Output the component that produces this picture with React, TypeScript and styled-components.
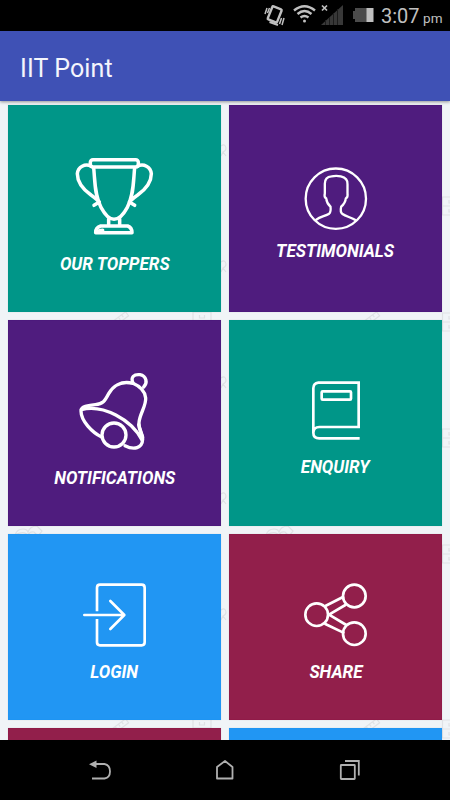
import React from "react";
import styled, { createGlobalStyle } from "styled-components";

const GlobalStyle = createGlobalStyle`
  * { box-sizing: border-box; }
  html, body { margin: 0; padding: 0; }
  body { background: #000; font-family: Roboto, "Open Sans", sans-serif; overflow: hidden; }
`;

const Screen = styled.div`
  width: 450px;
  height: 800px;
  display: flex;
  flex-direction: column;
  overflow: hidden;
  background: #000;
`;

const StatusBar = styled.div`
  height: 31px;
  flex: none;
  display: flex;
  justify-content: flex-end;
  align-items: flex-start;
  padding-right: 7.500px;
  background: #000;
`;

const StatusIcons = styled.svg`
  width: 112px;
  height: 31px;
  display: block;
  margin-right: 5px;
`;

const Clock = styled.div`
  display: flex;
  align-items: baseline;
  justify-content: space-between;
  width: 61.500px;
  color: #c0c0c0;
  font-size: 20px;
  line-height: 33px;
  white-space: nowrap;
`;

const Meridiem = styled.span`
  font-size: 13.500px;
`;

const AppBar = styled.header`
  height: 70px;
  flex: none;
  position: relative;
  display: flex;
  align-items: center;
  padding: 5px 20px 0;
  background: #3f51b5;
  box-shadow: 0 1px 3px rgba(0, 0, 0, 0.4);
  z-index: 1;
`;

const Title = styled.h1`
  margin: 0;
  color: #f4f5fc;
  font-size: 25px;
  font-weight: 400;
  line-height: 32px;
  letter-spacing: 0.1px;
`;

const Content = styled.main`
  height: 639px;
  flex: none;
  position: relative;
  overflow: hidden;
  background: #f0f4f7;
`;

const Doodles = styled.svg`
  position: absolute;
  inset: 0;
  width: 450px;
  height: 639px;
`;

const Grid = styled.div`
  position: relative;
  display: grid;
  grid-template-columns: 213px 213px;
  grid-template-rows: 206.5px 206.5px 186px 186px;
  gap: 8px;
  padding: 4px 8px 0;
`;

const Tile = styled.section<{ $color: string; $edge: string; $top: number }>`
  display: flex;
  flex-direction: column;
  align-items: center;
  padding-top: ${(p) => p.$top}px;
  background: ${(p) => p.$color};
  box-shadow: inset 0 0 1px ${(p) => p.$edge}, 0 0 1px rgba(0, 0, 0, 0.15);
`;

const TileIcon = styled.svg<{ $size: number }>`
  width: ${(p) => p.$size}px;
  height: ${(p) => p.$size}px;
  flex: none;
  fill: none;
  stroke: #fff;
  stroke-width: 8;
  stroke-linecap: round;
  stroke-linejoin: round;
`;

const Label = styled.span<{ $gap: number }>`
  margin-top: ${(p) => p.$gap}px;
  color: #fff;
  font-size: 18px;
  font-weight: 700;
  font-style: italic;
  line-height: 22px;
  white-space: nowrap;
  transform: scaleX(0.95);
`;

const NavBar = styled.nav`
  height: 60px;
  flex: none;
  display: flex;
  justify-content: center;
  align-items: center;
  gap: 101px;
  background: #000;
`;

const NavIcon = styled.svg`
  width: 24px;
  height: 24px;
  fill: none;
  stroke: #b0b0b0;
  stroke-width: 1.8;
`;

const Ruler = ({ x, y }: { x: number; y: number }) => (
  <g transform={`translate(${x} ${y}) rotate(-37)`}>
    <path d="M0 0H17V5H0ZM4 0V3M8 0V3M12 0V3" />
  </g>
);

const Cabinet = ({ x, y }: { x: number; y: number }) => (
  <path transform={`translate(${x} ${y})`} d="M0 0H18V18H0ZM0 9H18M6.500 3V6H11.500V3M6.500 12V15H11.500V12" />
);

const Medal = ({ x, y }: { x: number; y: number }) => (
  <path transform={`translate(${x} ${y})`} d="M0 1Q4 -2 5 3Q5 6 2 7L5 11M2 7L0 11" />
);

const Book = ({ x, y }: { x: number; y: number }) => (
  <path transform={`translate(${x} ${y})`} d="M0 9Q2 3 8 3Q12 3 13 6Q15 0 22 0L27 5L23 10L19 6Q14 5 13 10Q10 4 0 9" />
);

const tiles = [
  {
    label: "OUR TOPPERS", color: "#009688", edge: "#008f80", top: 52, size: 80, gap: 15.500,
    box: "75 36 240 240",
    art: (
      <g strokeWidth="10.500">
        <rect x="121" y="44" width="144" height="22" rx="8" />
        <path d="M131 68C135 105 133 150 153 187C167 213 179 223 192 223S218 213 232 187C252 150 250 105 254 68" />
        <path d="M124 64C105 54 84 66 82 86C82 115 101 134 123 150C132 156 139 162 146 169M262 64C281 54 302 66 304 86C304 115 285 134 263 150C254 156 247 162 240 169" />
        <path d="M132 181L148 171M254 181L238 171" />
        <path d="M176 222V241M209 222V241M152 243H233Q246 248 246 263H137Q137 247 152 243ZM147 260Q149 256 158 256" />
      </g>
    ),
  },
  {
    label: "TESTIMONIALS", color: "#4f1c7e", edge: "#3b086e", top: 61, size: 66, gap: 7.500,
    box: "98.5 33 198 198",
    art: (
      <g strokeWidth="7">
        <circle cx="197" cy="131" r="90.500" />
        <path d="M138 194C151 185 166 183 177 176Q183 171 181 155C173 148 169 139 168 130Q161 127 164 115V86C164 73 171 65 184 64Q198 61 212 64C225 67 233 76 232 88V115Q234 127 227 130C226 140 221 148 213 155Q209 171 217 177C228 185 244 187 257 196" />
      </g>
    ),
  },
  {
    label: "NOTIFICATIONS", color: "#4f1c7e", edge: "#3b086e", top: 52, size: 80, gap: 15.500,
    box: "90 34 240 240",
    art: (
      <g strokeWidth="10">
        <path d="M264 68C227 59 203 77 191 99C179 122 174 130 151 132C123 135 108 138 108 151C108 181 142 216 170 229M240 255C267 269 292 263 293 235C292 216 280 211 282 186C284 159 304 136 302 112Q299 83 264 68" />
        <path d="M109 147C174 130 259 177 291 238M264 67C256 49 267 40 285 42C304 46 309 66 296 79M281 192L293 230" />
        <circle cx="207" cy="223" r="36" />
      </g>
    ),
  },
  {
    label: "ENQUIRY", color: "#009688", edge: "#008f80", top: 58.500, size: 66, gap: 12,
    box: "39 24 198 198",
    art: (
      <g strokeWidth="8" strokeLinejoin="miter" strokeLinecap="butt">
        <path d="M209 205H88Q70 205 70 188Q71 171 88 171H206V38H85Q70 40 70 55V188" />
        <rect x="95" y="64" width="88" height="25" rx="3" />
      </g>
    ),
  },
  {
    label: "LOGIN", color: "#2196f3", edge: "#0c8df5", top: 48, size: 66, gap: 12.500,
    box: "36 36 198 198",
    art: (
      <g strokeWidth="8">
        <path strokeLinecap="butt" d="M81 124V53Q81 44 90 44H215Q224 44 224 53V217Q224 226 215 226H90Q81 226 81 217V147" />
        <path d="M43 135H162M121 93L163 135L121 177" />
      </g>
    ),
  },
  {
    label: "SHARE", color: "#921f4b", edge: "#850433", top: 48, size: 66, gap: 12.500,
    box: "39 36 198 198",
    art: (
      <g strokeWidth="8">
        <circle cx="80" cy="134" r="34" />
        <circle cx="193" cy="78" r="34" />
        <circle cx="193" cy="191" r="34" />
        <path d="M106 108L159 81M117 134L166 105M117 134L169 165M106 162L160 188" />
      </g>
    ),
  },
];

export default function App() {
  return (
    <>
      <GlobalStyle />
      <Screen>
        <StatusBar>
          <StatusIcons viewBox="264 0 112 31" fill="none">
            <g stroke="#c0c0c0">
              <rect x="269.500" y="7.500" width="10" height="14" rx="1" strokeWidth="2.400" transform="rotate(22 274.700 15)" />
              <path d="M269.500 22L278 25" strokeWidth="2" />
              <path d="M267 8L265 14M269.500 8L267.500 13M281.500 18L279.500 24M284 18L282 25" strokeWidth="1.500" />
              <path d="M294 10.500Q304.500 2 315 10.500M297.500 14Q304.500 8 311.500 14M300.500 17.500Q304.500 14.500 308.500 17.500" strokeWidth="2.400" />
              <path d="M322 5.500L327 10.500M327 5.500L322 10.500" strokeWidth="1.700" />
            </g>
            <circle cx="304.500" cy="21" r="1.500" fill="#c0c0c0" />
            <path d="M321 25L343 5V25Z" fill="#383838" />
            <path d="M325.500 25V20M329.500 25V17M333.500 25V13M337.500 25V9" stroke="#1c1c1c" />
            <path d="M355 8H367V22H355V19H353V11H355Z" fill="#4b4b4b" />
            <rect x="366.500" y="8" width="7" height="14" fill="#c0c0c0" />
          </StatusIcons>
          <Clock>3:07<Meridiem>pm</Meridiem></Clock>
        </StatusBar>
        <AppBar>
          <Title>IIT Point</Title>
        </AppBar>
        <Content>
          <Doodles viewBox="0 101 450 639" fill="none" stroke="#dfe2e5" strokeWidth="1.200">
            {[322, 729].map((y) => (
              <React.Fragment key={y}>
                <Ruler x={112} y={y} />
                <Ruler x={363} y={y} />
                <Cabinet x={193} y={y - 10} />
                <Cabinet x={442.500} y={y - 9} />
              </React.Fragment>
            ))}
            {[197, 429, 545].map((y) => <Cabinet key={y} x={442.500} y={y} />)}
            {[145, 261, 377, 493, 609].map((y) => <Medal key={y} x={221} y={y} />)}
            <Book x={15} y={526} />
            <Book x={266} y={526} />
          </Doodles>
          <Grid>
            {tiles.map((t) => (
              <Tile key={t.label} $color={t.color} $edge={t.edge} $top={t.top}>
                <TileIcon viewBox={t.box} $size={t.size}>{t.art}</TileIcon>
                <Label $gap={t.gap}>{t.label}</Label>
              </Tile>
            ))}
            <Tile $color="#921f4b" $edge="#850433" $top={0} />
            <Tile $color="#2196f3" $edge="#0c8df5" $top={0} />
          </Grid>
        </Content>
        <NavBar>
          <NavIcon viewBox="88 758 24 24">
            <path d="M92 778.500H104.500Q110 777.500 110 771.500Q110 765 104.500 764H95" />
            <path d="M89 764.300L96.500 760.500V768Z" fill="#b0b0b0" stroke="none" />
          </NavIcon>
          <NavIcon viewBox="213 758 24 24">
            <path d="M217 778.500V767L225 761L232.500 767V778.500Z" strokeLinejoin="round" />
          </NavIcon>
          <NavIcon viewBox="338 758 24 24">
            <rect x="340.800" y="765" width="14" height="14" rx="0.500" />
            <path d="M345 761H358.800V775.500" />
          </NavIcon>
        </NavBar>
      </Screen>
    </>
  );
}
